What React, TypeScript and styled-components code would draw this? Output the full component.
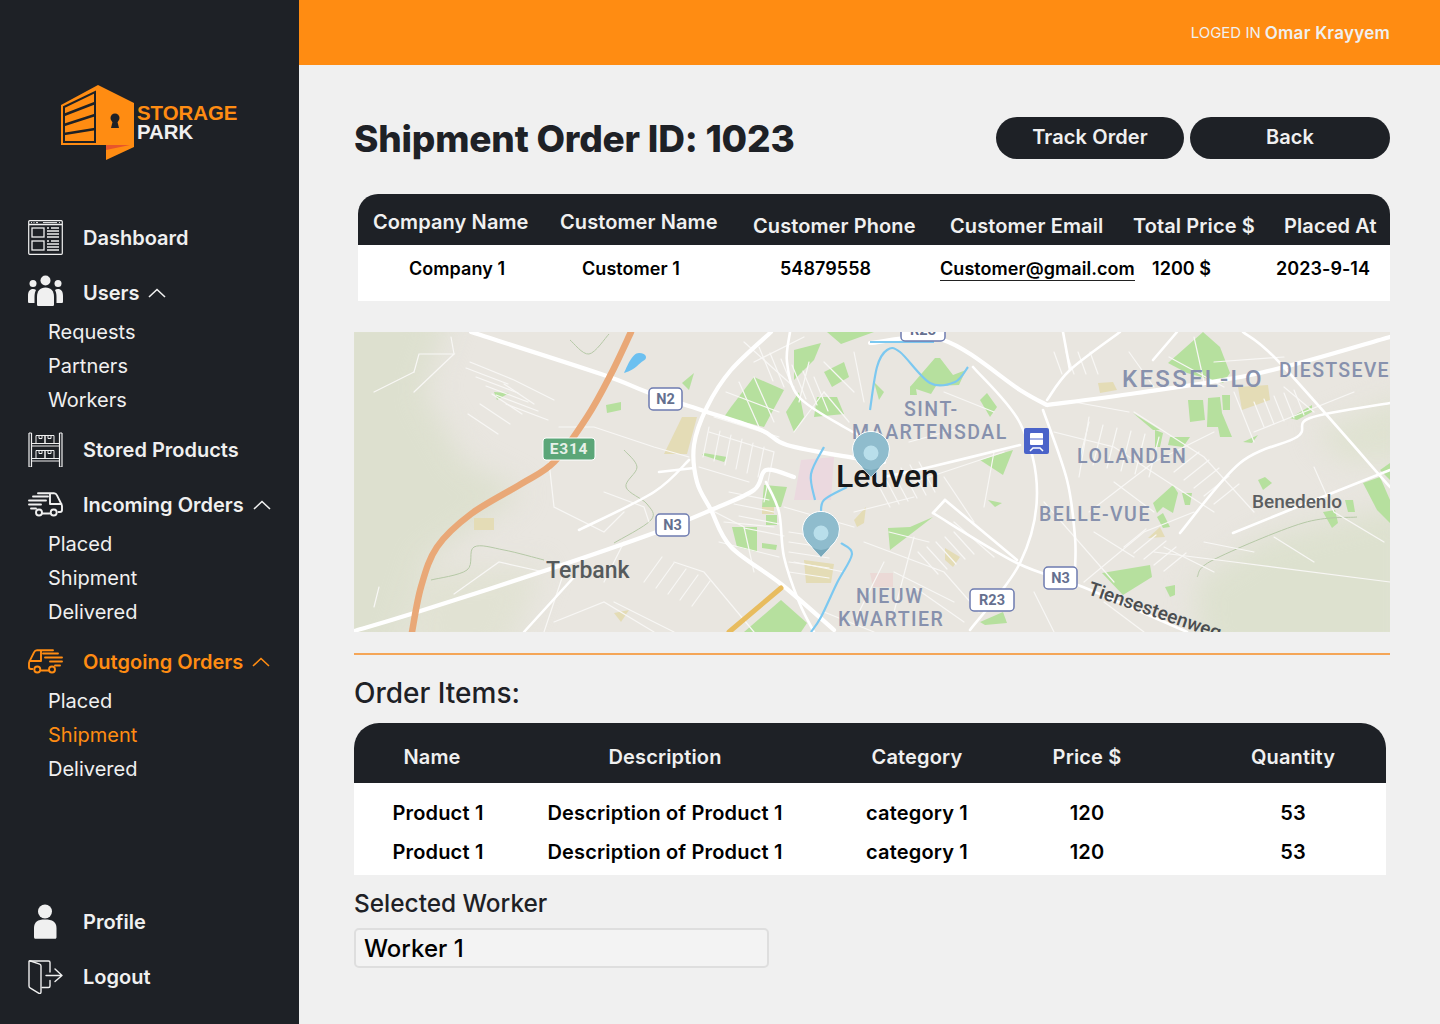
import styled, { createGlobalStyle } from "styled-components";

const GlobalStyle = createGlobalStyle`
  * { box-sizing: border-box; }
  html, body { margin: 0; padding: 0; }
  body {
    background: #f0f0f0;
    font-family: Inter, "Liberation Sans", sans-serif;
    color: #1e2126;
  }
`;

const Page = styled.div`
  display: flex;
  width: 1440px;
  height: 1024px;
  overflow: hidden;
`;

const Sidebar = styled.aside`
  width: 299px;
  flex-shrink: 0;
  background: #1e2126;
  display: flex;
  flex-direction: column;
  justify-content: space-between;
  padding-bottom: 20px;
`;

const LogoWrap = styled.div`
  display: flex;
  align-items: center;
  padding: 85px 0 0 60px;
  margin-bottom: 50px;
`;

const LogoText = styled.div`
  font-family: "Liberation Sans", Arial, sans-serif;
  font-weight: 700;
  font-size: 20.4px;
  line-height: 19px;
  margin: 1px 0 0 3px;
  color: #ff8c12;
  span { display: block; color: #f0f0f0; }
`;

const NavItem = styled.div<{ $active?: boolean }>`
  display: flex;
  align-items: center;
  height: 55px;
  padding-left: 28px;
  font-size: 20px;
  font-weight: 600;
  color: ${(p) => (p.$active ? "#ff8c12" : "#f0f0f0")};
  svg.icon { width: 35px; height: 35px; margin-right: 20px; flex-shrink: 0; }
  svg.chev { margin-left: 9px; }
`;

const SubList = styled.div`
  display: flex;
  flex-direction: column;
  margin: -5px 0 5px;
`;

const SubItem = styled.div<{ $active?: boolean }>`
  height: 34px;
  line-height: 34px;
  padding-left: 48px;
  font-size: 20px;
  font-weight: 400;
  color: ${(p) => (p.$active ? "#ff8c12" : "#f0f0f0")};
`;

const Main = styled.div`
  flex: 1;
  display: flex;
  flex-direction: column;
  min-width: 0;
`;

const TopBar = styled.header`
  height: 65px;
  background: #ff8c12;
  display: flex;
  align-items: center;
  justify-content: flex-end;
  padding-right: 50px;
  color: #f0f0f0;
  font-size: 15px;
  b { font-size: 17px; font-weight: 600; letter-spacing: 0.25px; margin-left: 4px; }
`;

const Content = styled.main`
  padding: 52px 50px 0 55px;
`;

const TitleRow = styled.div`
  display: flex;
  align-items: center;
  justify-content: space-between;
  height: 42px;
`;

const Title = styled.h1`
  margin: 0;
  font-size: 37px;
  font-weight: 800;
  letter-spacing: -0.2px;
`;

const Buttons = styled.div`
  display: flex;
  gap: 6px;
`;

const Pill = styled.button<{ $w: number }>`
  width: ${(p) => p.$w}px;
  height: 42px;
  border: 0;
  border-radius: 21px;
  padding: 0 0 2px;
  background: #1e2126;
  color: #f0f0f0;
  font: 600 20px Inter, sans-serif;
  letter-spacing: 0.1px;
`;

const OrderTable = styled.div`
  margin: 35px 0 31px 4px;
`;

const OrderHead = styled.div`
  display: grid;
  grid-template-columns: 187px 193px 197px 183px 151px auto;
  height: 51px;
  padding-left: 15px;
  background: #1e2126;
  border-radius: 20px 20px 0 0;
  color: #f0f0f0;
  font-size: 20px;
  font-weight: 600;
  letter-spacing: 0.1px;
  white-space: nowrap;
`;

const OrderHeadCell = styled.div<{ $raised?: boolean }>`
  line-height: 20px;
  padding-top: ${(p) => (p.$raised ? 18 : 22)}px;
`;

const OrderRow = styled.div`
  display: grid;
  grid-template-columns: 173px 198px 160px 212px 124px auto;
  height: 56px;
  padding: 13px 0 0 51px;
  background: #fff;
  color: #000;
  font-size: 18px;
  font-weight: 600;
  letter-spacing: 0.05px;
  line-height: 22px;
  white-space: nowrap;
`;

const EmailLink = styled.a`
  color: #000;
  justify-self: start;
  border-bottom: 1.5px solid #222;
  height: 23px;
`;

const MapBox = styled.div`
  height: 300px;
  overflow: hidden;
  svg { display: block; }
`;

const Divider = styled.hr`
  margin: 21px 0 0;
  border: 0;
  height: 2px;
  background: #f5a657;
`;

const SectionTitle = styled.h2`
  margin: 22px 0 13px;
  font-size: 28px;
  line-height: 33px;
  font-weight: 500;
`;

const ItemsTable = styled.div`
  width: 1032px;
  background: #fff;
  border-radius: 25px 25px 0 0;
  overflow: hidden;
  padding-bottom: 4px;
`;

const itemCols = "158px 306px 198px 142px 228px";

const ItemsHead = styled.div`
  display: grid;
  grid-template-columns: ${itemCols};
  height: 60px;
  align-items: center;
  text-align: center;
  background: #1e2126;
  color: #f0f0f0;
  font-size: 20px;
  font-weight: 600;
  letter-spacing: 0.15px;
  padding-top: 8px;
  margin-bottom: 10px;
  div:first-child { padding-right: 2px; }
  div:last-child { padding-left: 42px; }
`;

const ItemsRow = styled.div`
  display: grid;
  grid-template-columns: ${itemCols};
  height: 39px;
  align-items: center;
  text-align: center;
  color: #000;
  font-size: 20px;
  font-weight: 600;
  letter-spacing: 0.17px;
  white-space: nowrap;
  div:first-child { padding-left: 10px; }
  div:last-child { padding-left: 42px; }
`;

const WorkerLabel = styled.div`
  margin: 12px 0 8px;
  font-size: 24.4px;
  line-height: 33px;
  font-weight: 500;
`;

const WorkerBox = styled.div`
  width: 415px;
  height: 40px;
  padding-left: 8px;
  border: 2px solid #dedede;
  border-radius: 5px;
  background: #f3f3f3;
  color: #000;
  font-size: 24px;
  font-weight: 500;
  line-height: 37px;
`;

const Chevron = () => (
  <svg className="chev" width="18" height="10" viewBox="0 0 18 10" fill="none" stroke="currentColor" strokeWidth="1.6">
    <path d="M1 9 9 1.5 17 9" />
  </svg>
);

const Icon = ({ children }: { children: React.ReactNode }) => (
  <svg className="icon" viewBox="0 0 35 35" fill="none" stroke="currentColor" strokeWidth="1.2">
    {children}
  </svg>
);

const DashboardIcon = () => (
  <Icon>
    <rect x="0.7" y="0.7" width="33.6" height="33.6" rx="1" />
    <path d="M1 4.5h33" strokeWidth="1.5" />
    <path d="M3 2.6h1M5.5 2.6h1M8 2.6h2M15 2.6h14M31 2.6h1" strokeWidth="1" />
    <rect x="4" y="8" width="12" height="9" strokeWidth="1.3" />
    <rect x="4" y="21" width="12" height="9" strokeWidth="1.3" />
    <path d="M19 8h2M23 8h8M19 11h12M19 14h12M19 17h12M19 21h2M23 21h8M19 24h12M19 27h12M19 30h12" strokeWidth="1.5" />
  </Icon>
);

const UsersIcon = () => (
  <Icon>
    <g fill="currentColor" stroke="none">
      <circle cx="5" cy="8.5" r="3.5" />
      <circle cx="17.5" cy="5.5" r="5" />
      <circle cx="30" cy="8.5" r="3.5" />
      <path d="M0 21c0-5 2-7 5-7 1.300 0 2.300.300 3 1-1 1.800-1.500 4-1.500 7v6H1.500C.5 28 0 27.500 0 26.500z" />
      <path d="M35 21c0-5-2-7-5-7-1.300 0-2.300.300-3 1 1 1.800 1.500 4 1.500 7v6h5c1 0 1.500-.5 1.500-1.500z" />
      <path d="M9 22c0-6 3-9.500 8.500-9.500S26 16 26 22v7.500c0 1-.7 1.500-1.500 1.500h-14C9.700 31 9 30.500 9 29.500z" />
    </g>
  </Icon>
);

const ShelfIcon = () => (
  <Icon>
    <path d="M1 1v34M3.500 1v34M31.500 1v34M34 1v34M1 1h2.500M31.500 1h2.500M1 35h2.500M31.500 35h2.500" />
    <path d="M3.500 11.500h28M3.500 14h28M3.500 26.500h28M3.500 29h28" />
    <path d="M8 11.500V3.500h9v8M17 11.500V3.500h9v8M11 3.500v3h3v-3M20 3.500v3h3v-3M8 26.500v-8h9v8M17 26.500v-8h9v8M11 18.500v3h3v-3M20 18.500v3h3v-3" strokeWidth="1" />
  </Icon>
);

const TruckIcon = ({ flip }: { flip?: boolean }) => (
  <Icon>
    <g transform={flip ? "matrix(-1 0 0 1 35 0)" : undefined} strokeWidth="1.900" strokeLinecap="round" strokeLinejoin="round">
      <path d="M10 6.300h12V17h11.500M22 6.300h4c1.500 0 2.300.6 3 2l4.500 9c.4.8.500 1.300.500 2.200v3.500c0 1.500-.7 2-2 2h-1.500M14.500 26.500h7" />
      <circle cx="11" cy="25.500" r="3" />
      <circle cx="25.700" cy="25.500" r="3" />
      <path d="M5 9.500h15M1 13.500h17M1 17.500h12M3 21.500h5" />
    </g>
  </Icon>
);

const PersonIcon = () => (
  <Icon>
    <g fill="currentColor" stroke="none">
      <circle cx="17" cy="7.500" r="7" />
      <path d="M6 24c0-6 3.500-8.500 11-8.500S28.500 18 28.500 24v9c0 1-.5 1.800-1.500 1.800H7.500C6.500 34.800 6 34 6 33z" />
    </g>
  </Icon>
);

const LogoutIcon = () => (
  <Icon>
    <g strokeWidth="1.400" strokeLinecap="round" strokeLinejoin="round">
      <path d="M1.500 2h19c1 0 1.500.5 1.500 1.500V13M22 21.500V27c0 1-.5 1.500-1.500 1.500H14" />
      <path d="M1 2.500V27c0 1 .3 1.500 1 1.800l9 5.500c1 .5 2 .2 2-1.300V7c0-1-.4-1.600-1.300-1.900L2.500 2C1.600 1.700 1 2 1 2.500z" />
      <path d="M18 16.500h16M27 10l7 6.500-7 6" />
    </g>
  </Icon>
);

const Logo = () => (
  <svg width="74" height="75" viewBox="0 0 74 75">
    <path d="M1 20 38 0 74 18v44L46 75V60H1z" fill="#ff8c12" />
    <path d="M46 60h24L46 65z" fill="#e8552b" />
    <path d="M4 22 35 7v50H4z" fill="none" stroke="#1e2126" strokeWidth="2" />
    <path d="M4 30 35 18M4 40 35 30M4 49 35 44" stroke="#1e2126" strokeWidth="2.500" />
    <circle cx="55" cy="33" r="4.500" fill="#1e2126" />
    <path d="M53 35h4l2 8h-8z" fill="#1e2126" />
  </svg>
);

// map data is in map pixels, read off the reference
const roadsWide: number[][][] = [
  [[117, 0], [247, 42], [293, 60], [347, 78], [407, 98], [433, 113], [500, 126], [530, 130]],
  [[0, 299], [57, 282], [193, 238], [300, 201], [357, 178], [400, 158], [412, 138], [440, 145]],
  [[417, 0], [377, 38], [353, 75], [340, 113], [343, 150], [357, 178], [377, 215], [427, 252], [480, 298]],
  [[693, 73], [783, 61], [906, 41], [1036, 5]],
  [[516, 11], [589, 8], [666, 58], [693, 73]],
];

const roadsMid: number[][][] = [
  [[619, 35], [666, 91], [683, 161], [666, 231], [616, 298]],
  [[689, 78], [713, 148], [721, 205], [721, 238]],
  [[530, 145], [576, 135], [666, 113]],
  [[579, 181], [663, 231], [729, 255], [833, 300]],
  [[591, 168], [663, 228]],
  [[579, 181], [591, 168]],
  [[826, 201], [886, 131], [943, 105], [956, 86], [1036, 71]],
  [[879, 201], [943, 175], [1036, 138]],
  [[889, 0], [926, 31], [1036, 155]],
  [[709, 0], [716, 38]],
  [[766, 0], [716, 38], [693, 68]],
  [[823, 0], [799, 28]],
  [[436, 0], [433, 30], [445, 65], [490, 95], [510, 105]],
  [[305, 140], [340, 136]],
  [[170, 300], [220, 245]],
  [[412, 150], [425, 180], [430, 225], [445, 270], [460, 300]],
  [[225, 198], [300, 160], [335, 128]],
];

const streets: number[][][] = [
  [[60, 60], [100, 22], [65, 22], [60, 40]], [[100, 22], [97, 5]], [[116, 30], [160, 48], [200, 68]],
  [[60, 40], [20, 60]], [[205, 95], [240, 95], [300, 115], [335, 125]],
  [[195, 130], [200, 175], [250, 200], [270, 180]], [[250, 160], [290, 175], [295, 190]],
  [[100, 262], [145, 230], [190, 240]], [[210, 240], [190, 300]], [[260, 270], [320, 300]], [[250, 250], [270, 210]],
  [[20, 275], [25, 255]], [[200, 290], [250, 270], [300, 300]], [[320, 230], [350, 240], [400, 300]], [[400, 240], [390, 195], [357, 178]],
  [[355, 100], [420, 120], [410, 170]], [[360, 85], [425, 105]], [[345, 135], [395, 150]],
  [[390, 10], [440, 55]], [[400, 30], [450, 5]], [[470, 30], [500, 60]], [[440, 100], [470, 60]], [[455, 30], [445, 70]], [[500, 20], [510, 70]],
  [[370, 190], [420, 195]], [[365, 210], [425, 225]], [[430, 175], [500, 195]], [[440, 230], [490, 240]], [[470, 280], [520, 300]],
  [[500, 180], [560, 165]], [[510, 210], [590, 240], [625, 280]], [[530, 230], [500, 290]], [[560, 205], [540, 280]], [[600, 190], [640, 225]],
  [[555, 110], [610, 95]], [[590, 60], [640, 80]], [[560, 150], [650, 120]], [[590, 145], [620, 190]], [[640, 120], [630, 175]],
  [[700, 100], [760, 115], [860, 180]], [[735, 85], [725, 145]], [[780, 80], [850, 125], [900, 180]], [[720, 70], [775, 80]],
  [[735, 180], [800, 130], [860, 100]], [[730, 250], [790, 200], [840, 180]], [[690, 170], [760, 250]], [[740, 200], [780, 225]],
  [[800, 220], [880, 230], [1036, 250]], [[810, 215], [860, 240]], [[900, 100], [1000, 60]], [[930, 55], [960, 80]], [[960, 135], [980, 180], [1030, 210]],
  [[680, 260], [700, 300]], [[750, 270], [790, 300]], [[560, 255], [610, 290]], [[860, 30], [930, 25]], [[775, 20], [800, 55]],
  [[540, 240], [600, 270]], [[760, 150], [800, 180]], [[880, 60], [900, 110]], [[920, 205], [960, 230]], [[850, 210], [900, 220]],
  [[372, 60], [425, 80]], [[385, 50], [405, 95]], [[400, 45], [420, 90]], [[815, 25], [870, 55]], [[840, 5], [850, 50]], [[470, 60], [495, 90]], [[535, 200], [575, 210]],
];

// rows of parallel side streets for the built-up blocks
const blocks = [
  { x: 112, y: 36, dx: 10, dy: 9, n: 5, lx: 42, ly: 16 },
  { x: 150, y: 52, dx: -12, dy: 10, n: 4, lx: 30, ly: 20 },
  { x: 355, y: 95, dx: 11, dy: 4, n: 6, lx: -6, ly: 30 },
  { x: 405, y: 15, dx: 11, dy: 6, n: 6, lx: 14, ly: 34 },
  { x: 435, y: 200, dx: 0, dy: 10, n: 5, lx: 40, ly: 6 },
  { x: 375, y: 160, dx: 5, dy: 12, n: 4, lx: 40, ly: 8 },
  { x: 520, y: 145, dx: 9, dy: -3, n: 6, lx: 16, ly: 30 },
  { x: 600, y: 200, dx: -9, dy: 5, n: 5, lx: 20, ly: 22 },
  { x: 735, y: 90, dx: 14, dy: 3, n: 6, lx: -10, ly: 40 },
  { x: 820, y: 140, dx: 10, dy: 8, n: 5, lx: 25, ly: -20 },
  { x: 900, y: 70, dx: 10, dy: -3, n: 5, lx: 10, ly: 25 },
  { x: 700, y: 20, dx: 12, dy: 0, n: 4, lx: 8, ly: 22 },
  { x: 770, y: 215, dx: 10, dy: 6, n: 5, lx: 22, ly: -18 },
  { x: 290, y: 250, dx: 12, dy: 6, n: 5, lx: 18, ly: -25 },
];

const blockStreets = blocks.flatMap((b) =>
  Array.from({ length: b.n }, (_, i) => [
    [b.x + b.dx * i, b.y + b.dy * i],
    [b.x + b.dx * i + b.lx, b.y + b.dy * i + b.ly],
  ])
);

const parks: string[] = [
  "377,75 400,45 430,58 410,95 370,85", "463,65 483,65 490,82 460,85", "440,18 467,11 460,28 440,48", "473,0 520,0 487,12",
  "410,153 433,155 427,175 408,175", "378,195 403,195 403,220 383,215", "412,183 423,183 423,193 412,193", "408,211 423,213 422,218 408,216",
  "350,121 373,125 370,130 348,123", "328,51 340,41 335,58", "252,73 267,70 267,78 253,81", "140,60 155,61 143,68", "390,300 427,268 453,291 447,300",
  "814,31 849,0 866,15 876,41 869,51 833,41", "834,68 849,68 851,88 836,90", "854,66 866,65 868,81 878,105 866,105 864,95 853,95", "868,63 876,63 876,78 869,78",
  "801,98 809,101 806,115 801,115", "816,105 836,105 829,115 814,113", "779,81 806,98 799,98", "889,110 904,103 898,111", "936,86 958,73 958,80 943,88",
  "904,148 911,145 918,151 909,158", "799,171 819,153 824,161 819,181 809,175 803,181", "828,161 838,161 836,173 831,173", "803,185 809,181 816,195 809,196",
  "748,241 796,233 798,245 769,263", "811,255 821,253 821,263 816,265", "626,128 659,118 649,143", "634,168 648,171 641,175", "534,196 556,195 579,185 536,218",
  "581,26 586,26 599,43 612,38 605,53 582,54 577,62 556,55", "626,68 633,61 643,75 636,85", "556,55 561,51 563,63 556,63", "1009,151 1026,145 1036,168 1036,191 1023,178",
  "969,180 981,178 984,191 978,196", "991,168 999,168 1001,180 994,180", "1026,138 1036,131 1036,148", "626,290 649,280 653,291 631,293",
  "432,80 445,60 450,85 440,100", "470,40 490,30 495,45 478,55", "520,50 530,60 525,68",
];

const sand: string[] = [
  "884,55 914,53 916,68 888,78", "744,51 759,50 763,58 746,61", "591,216 606,225 599,235 591,228", "794,206 806,195 811,205", "310,122 328,85 343,85 333,122",
  "120,186 140,186 140,198 120,198", "450,228 480,232 477,251 452,251", "500,188 512,175 510,191 503,195", "260,281 275,278 267,290", "408,175 420,175 420,182 408,182",
];

const toPoints = (line: number[][]) => line.map((p) => p.join(",")).join(" ");

// catmull-rom through the points so roads don't look like broken sticks
const smooth = (pts: number[][]) => {
  let d = `M${pts[0][0]} ${pts[0][1]}`;
  for (let i = 0; i < pts.length - 1; i++) {
    const p0 = pts[i - 1] || pts[i];
    const p1 = pts[i];
    const p2 = pts[i + 1];
    const p3 = pts[i + 2] || p2;
    d += `C${p1[0] + (p2[0] - p0[0]) / 6} ${p1[1] + (p2[1] - p0[1]) / 6} ${p2[0] - (p3[0] - p1[0]) / 6} ${p2[1] - (p3[1] - p1[1]) / 6} ${p2[0]} ${p2[1]}`;
  }
  return d;
};

const Street = styled.polyline`
  fill: none;
  stroke: #f8f7f5;
  stroke-width: 1.2px;
  stroke-linecap: round;
`;

const Road = styled.path<{ $w: number; $c?: string }>`
  fill: none;
  stroke: ${(p) => p.$c ?? "#fff"};
  stroke-width: ${(p) => p.$w}px;
  stroke-linecap: round;
`;

const MapLabel = styled.text<{ $w?: number }>`
  font-family: Roboto, "Open Sans", sans-serif;
  font-weight: ${(p) => p.$w ?? 500};
`;

const Shield = ({ x, y, w, label }: { x: number; y: number; w: number; label: string }) => (
  <g>
    <rect x={x} y={y} width={w} height="22" rx="4" fill="#fff" stroke="#6d7bb0" strokeWidth="1.500" />
    <MapLabel x={x + w / 2} y={y + 16} fontSize="14.500" $w={700} textAnchor="middle" fill="#65708f">{label}</MapLabel>
  </g>
);

const Pin = ({ x, y }: { x: number; y: number }) => (
  <g>
    <path d={`M${x} ${y + 24} L${x - 14} ${y + 9} A18.500 18.500 0 1 1 ${x + 14} ${y + 9} Z`} fill="#8fbccd" stroke="#fff" strokeWidth="1" />
    <path d={`M${x} ${y + 24} L${x - 9} ${y + 14} Q${x} ${y + 20} ${x + 9} ${y + 14} Z`} fill="#78a8ba" />
    <circle cx={x} cy={y} r="7.500" fill="#b9dfeb" />
  </g>
);

const LeuvenMap = () => (
  <svg width="1036" height="300" viewBox="0 0 1036 300">
    <rect width="1036" height="300" fill="#e9e6e0" />
    <g style={{ filter: "blur(14px)" }}>
      <path d="M-30-30H100L70 60 110 130 170 160 70 230 40 330H-30Z" fill="#dde0cf" />
      <path d="M70 240 190 235 150 330H50Z" fill="#e1e2d3" />
      <path d="M840 250 910 205 1060 170V330H850Z" fill="#dde1cf" />
      <path d="M960 100 1060 60V130L990 130Z" fill="#dfe2d1" />
    </g>
    <g style={{ filter: "blur(0.5px)" }}>
      <path d="M447 128 480 125 477 168 440 168Z" fill="#ebd9df" />
      <path d="M516 241H539V255H519Z" fill="#ebd9d6" />
      {parks.map((p) => <polygon key={p} points={p} fill="#b6e09e" />)}
      {sand.map((p) => <polygon key={p} points={p} fill="#e4dcb6" />)}
      <g fill="none" stroke="#b5c8a6" strokeWidth="1">
        <path d={smooth([[216, 8], [235, 22], [255, 2]])} />
        <path d={smooth([[270, 118], [283, 135], [272, 155], [293, 172], [297, 188], [260, 211]])} />
        <path d={smooth([[77, 248], [113, 238], [120, 215], [150, 218], [190, 228]])} />
        <path d={smooth([[843, 245], [859, 228], [949, 191], [1003, 185]])} />
      </g>
      {streets.map((l, i) => <Street key={i} points={toPoints(l)} />)}
      {blockStreets.map((l, i) => <Street key={i} points={toPoints(l)} />)}
      {roadsMid.map((l, i) => <Road key={i} d={smooth(l)} $w={2.6} />)}
      {roadsWide.map((l, i) => <Road key={i} d={smooth(l)} $w={4.2} />)}
      <Road d={smooth([[277, 0], [257, 42], [233, 85], [200, 130], [167, 152], [117, 182], [83, 215], [67, 255], [58, 300]])} $w={6.5} $c="#e9a877" />
      <Road d="M375 300 427 256" $w={5} $c="#e8bc5e" />
      <g fill="none" stroke="#7cc8f0" strokeWidth="2.200">
        <path d={smooth([[516, 78], [523, 35], [533, 18], [546, 20], [576, 51], [601, 50], [614, 35]])} />
        <path d={smooth([[470, 115], [457, 142], [461, 168]])} />
        <path d={smooth([[493, 155], [470, 168], [467, 182]])} />
        <path d={smooth([[487, 211], [498, 222], [483, 251], [467, 285], [457, 300]])} />
        <path d="M516 10H580" />
      </g>
      <path d="M270 41c3-6 8-20 15-20 8 0 9 6 4 8-4 2-6 8-19 12z" fill="#6cc0f0" />
    </g>
    <rect x="670" y="96" width="25" height="26" rx="2" fill="#4a63c9" />
    <rect x="676" y="101" width="13" height="12" rx="1" fill="#fff" />
    <path d="M676 107h13" stroke="#4a63c9" />
    <path d="M676 119l3-3h7l3 3" stroke="#fff" strokeWidth="1.500" fill="none" />
    <Shield x={295} y={56} w={33} label="N2" />
    <rect x="189" y="106" width="52" height="22" rx="3" fill="#5ba678" stroke="#fff" />
    <MapLabel x={215} y={122} fontSize="15.500" $w={700} textAnchor="middle" fill="#e6f0e8" letterSpacing="0.800">E314</MapLabel>
    <Shield x={302} y={182} w={33} label="N3" />
    <Shield x={690} y={235} w={33} label="N3" />
    <Shield x={616} y={257} w={44} label="R23" />
    <Shield x={547} y={-13} w={44} label="R23" />
    <g fill="#8791ad" letterSpacing="1.500">
      <MapLabel x={768} y={55} fontSize="24" letterSpacing="2.300">KESSEL-LO</MapLabel>
      <MapLabel x={925} y={45} fontSize="19.500" letterSpacing="1.300">DIESTSEVE</MapLabel>
      <MapLabel x={723} y={131} fontSize="19.500">LOLANDEN</MapLabel>
      <MapLabel x={685} y={189} fontSize="19.500">BELLE-VUE</MapLabel>
      <MapLabel x={550} y={84} fontSize="19.500">SINT-</MapLabel>
      <MapLabel x={498} y={107} fontSize="19.500">MAARTENSDAL</MapLabel>
      <MapLabel x={502} y={271} fontSize="19.500">NIEUW</MapLabel>
      <MapLabel x={484} y={294} fontSize="19.500">KWARTIER</MapLabel>
    </g>
    <MapLabel x={192} y={246} fontSize="23" fill="#555a5c">Terbank</MapLabel>
    <MapLabel x={898} y={176} fontSize="19" fill="#5b5e60">Benedenlo</MapLabel>
    <MapLabel x={733} y={262} fontSize="19" fill="#4a4d50" transform="rotate(19 733 262)">Tiensesteenweg</MapLabel>
    <MapLabel x={482} y={155} fontSize="32" fill="#16181a">Leuven</MapLabel>
    <Pin x={517} y={121} />
    <Pin x={467} y={201} />
  </svg>
);

const items = [
  ["Product 1", "Description of Product 1", "category 1", "120", "53"],
  ["Product 1", "Description of Product 1", "category 1", "120", "53"],
];

export default function App() {
  return (
    <Page>
      <GlobalStyle />
      <Sidebar>
        <div>
          <LogoWrap>
            <Logo />
            <LogoText>STORAGE<span>PARK</span></LogoText>
          </LogoWrap>
          <NavItem><DashboardIcon />Dashboard</NavItem>
          <NavItem><UsersIcon />Users<Chevron /></NavItem>
          <SubList>
            <SubItem>Requests</SubItem>
            <SubItem>Partners</SubItem>
            <SubItem>Workers</SubItem>
          </SubList>
          <NavItem><ShelfIcon />Stored Products</NavItem>
          <NavItem><TruckIcon />Incoming Orders<Chevron /></NavItem>
          <SubList>
            <SubItem>Placed</SubItem>
            <SubItem>Shipment</SubItem>
            <SubItem>Delivered</SubItem>
          </SubList>
          <NavItem $active><TruckIcon flip />Outgoing Orders<Chevron /></NavItem>
          <SubList>
            <SubItem>Placed</SubItem>
            <SubItem $active>Shipment</SubItem>
            <SubItem>Delivered</SubItem>
          </SubList>
        </div>
        <div>
          <NavItem><PersonIcon />Profile</NavItem>
          <NavItem><LogoutIcon />Logout</NavItem>
        </div>
      </Sidebar>
      <Main>
        <TopBar>LOGED IN<b>Omar Krayyem</b></TopBar>
        <Content>
          <TitleRow>
            <Title>Shipment Order ID: 1023</Title>
            <Buttons>
              <Pill $w={188}>Track Order</Pill>
              <Pill $w={200}>Back</Pill>
            </Buttons>
          </TitleRow>
          <OrderTable>
            <OrderHead>
              <OrderHeadCell $raised>Company Name</OrderHeadCell>
              <OrderHeadCell $raised>Customer Name</OrderHeadCell>
              <OrderHeadCell>Customer Phone</OrderHeadCell>
              <OrderHeadCell>Customer Email</OrderHeadCell>
              <OrderHeadCell>Total Price $</OrderHeadCell>
              <OrderHeadCell>Placed At</OrderHeadCell>
            </OrderHead>
            <OrderRow>
              <div>Company 1</div>
              <div>Customer 1</div>
              <div>54879558</div>
              <EmailLink>Customer@gmail.com</EmailLink>
              <div>1200 $</div>
              <div>2023-9-14</div>
            </OrderRow>
          </OrderTable>
          <MapBox><LeuvenMap /></MapBox>
          <Divider />
          <SectionTitle>Order Items:</SectionTitle>
          <ItemsTable>
            <ItemsHead>
              <div>Name</div>
              <div>Description</div>
              <div>Category</div>
              <div>Price $</div>
              <div>Quantity</div>
            </ItemsHead>
            {items.map((row, i) => (
              <ItemsRow key={i}>
                {row.map((cell, j) => <div key={j}>{cell}</div>)}
              </ItemsRow>
            ))}
          </ItemsTable>
          <WorkerLabel>Selected Worker</WorkerLabel>
          <WorkerBox>Worker 1</WorkerBox>
        </Content>
      </Main>
    </Page>
  );
}
